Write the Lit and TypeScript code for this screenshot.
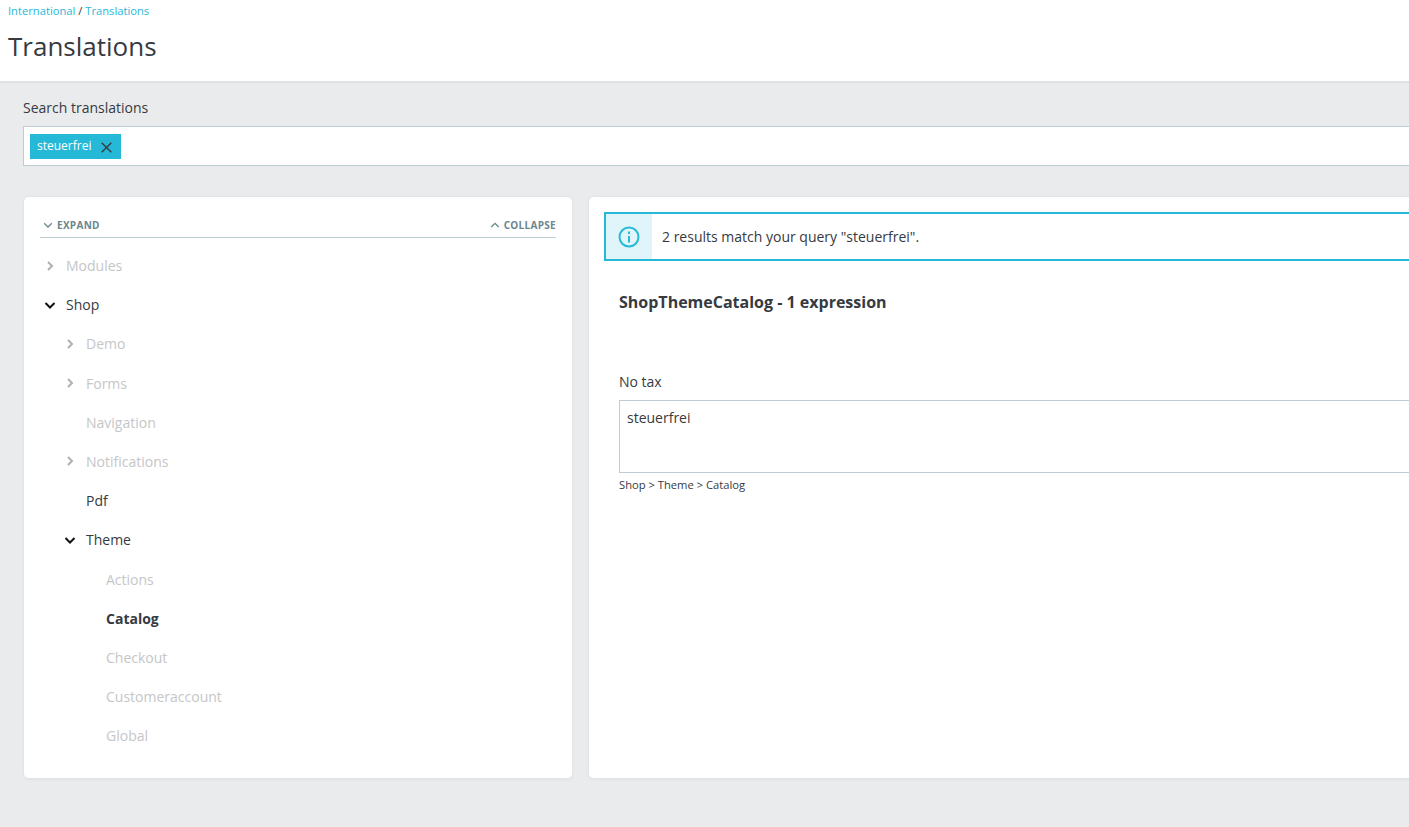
import { LitElement, html, css } from "lit";
import { customElement } from "lit/decorators.js";

type Row = { label: string; level: number; state: "closed" | "open" | "leaf"; kind: "muted" | "active" | "selected" };

const ROWS: Row[] = [
  { label: "Modules", level: 0, state: "closed", kind: "muted" },
  { label: "Shop", level: 0, state: "open", kind: "active" },
  { label: "Demo", level: 1, state: "closed", kind: "muted" },
  { label: "Forms", level: 1, state: "closed", kind: "muted" },
  { label: "Navigation", level: 1, state: "leaf", kind: "muted" },
  { label: "Notifications", level: 1, state: "closed", kind: "muted" },
  { label: "Pdf", level: 1, state: "leaf", kind: "active" },
  { label: "Theme", level: 1, state: "open", kind: "active" },
  { label: "Actions", level: 2, state: "leaf", kind: "muted" },
  { label: "Catalog", level: 2, state: "leaf", kind: "selected" },
  { label: "Checkout", level: 2, state: "leaf", kind: "muted" },
  { label: "Customeraccount", level: 2, state: "leaf", kind: "muted" },
  { label: "Global", level: 2, state: "leaf", kind: "muted" },
];

const chevron = (d: string, cls: string) =>
  html`<svg class=${cls} viewBox="0 0 12 12" fill="none" stroke="currentColor"><path d=${d}></path></svg>`;

@customElement("app-root")
export class AppRoot extends LitElement {
  static styles = css`
    :host {
      display: block;
      width: 1409px;
      height: 827px;
      overflow: hidden;
      background: #eaebed;
      font-family: "Open Sans", sans-serif;
      font-size: 14px;
      color: #363a41;
    }
    .header {
      background: #fff;
      height: 81px;
      border-bottom: 2px solid #dfe1e3;
      padding: 0 8px;
    }
    .crumbs {
      font-size: 11.2px;
      line-height: 15px;
      padding-top: 3px;
    }
    .crumbs a {
      color: #25b9d7;
      text-decoration: none;
    }
    h1 {
      margin: 0;
      padding-top: 10px;
      font-size: 26px;
      font-weight: 400;
      line-height: 36px;
    }
    .main {
      width: 1600px;
      padding: 15px 0 0 23px;
      box-sizing: border-box;
    }
    .search-label {
      line-height: 19px;
      margin-bottom: 9px;
    }
    .search {
      height: 40px;
      box-sizing: border-box;
      background: #fff;
      border: 1px solid #bbcdd2;
      padding: 7px 6px;
      display: flex;
      align-items: flex-start;
    }
    .tag {
      display: flex;
      align-items: center;
      height: 25px;
      width: 91px;
      box-sizing: border-box;
      background: #25b9d7;
      color: #fff;
      font-size: 12px;
      padding: 0 7px;
      justify-content: space-between;
    }
    .tag span {
      position: relative;
      top: -1px;
    }
    .tag svg {
      width: 11px;
      height: 11px;
      margin-right: 2px;
      margin-top: 2px;
      color: #363a41;
    }
    .cols {
      display: grid;
      grid-template-columns: 548px 1fr;
      gap: 17px;
      margin-top: 31px;
      margin-left: 1px;
    }
    .card {
      background: #fff;
      height: 582px;
      border-radius: 5px;
      box-shadow: 0 0 4px 0 rgba(0, 0, 0, 0.06);
      box-sizing: border-box;
      border-bottom: 1px solid #dbe6e9;
    }
    .tree {
      padding: 16px 16px 0;
    }
    .tools {
      display: flex;
      justify-content: space-between;
      align-items: center;
      height: 24px;
      border-bottom: 1px solid #bbcdd2;
      font-size: 10px;
      font-weight: 700;
      color: #6c868e;
      letter-spacing: 0.3px;
    }
    .tools div {
      display: flex;
      align-items: center;
      gap: 4px;
    }
    .tools div:first-child {
      margin-left: 3px;
    }
    .tool-icon {
      width: 10px;
      height: 10px;
      color: #6c868e;
      stroke-width: 1.6;
    }
    .rows {
      margin-top: 7.95px;
    }
    .row {
      display: flex;
      align-items: center;
      height: 39.2px;
      padding-left: 4px;
      color: #363a41;
    }
    .row.muted {
      color: #c5c6c8;
    }
    .row.selected {
      font-weight: 700;
    }
    .l1 { padding-left: 24px; }
    .l2 { padding-left: 44px; }
    .arrow {
      width: 12px;
      height: 12px;
      flex: none;
      margin-right: 10px;
      color: #b0b0b0;
      stroke-width: 2;
    }
    .arrow.open {
      color: #111;
    }
    .spacer {
      width: 22px;
      flex: none;
    }
    .results {
      padding: 15px 0 0 15px;
    }
    .alert {
      display: flex;
      align-items: center;
      height: 49px;
      box-sizing: border-box;
      border: 2px solid #25b9d7;
      background: #fff;
    }
    .alert-icon {
      width: 46px;
      height: 100%;
      background: #dff5f9;
      display: flex;
      align-items: center;
      justify-content: center;
      flex: none;
    }
    .alert-icon svg {
      width: 22px;
      height: 22px;
      color: #25b9d7;
    }
    .alert-text {
      margin-left: 10px;
      color: #363a41;
    }
    h2 {
      margin: 30px 0 0 15px;
      font-size: 16px;
      font-weight: 700;
      line-height: 22px;
    }
    .field {
      margin: 59px 0 0 15px;
    }
    .field-label {
      line-height: 19px;
      margin-bottom: 9px;
    }
    .box {
      height: 73px;
      box-sizing: border-box;
      border: 1px solid #bbcdd2;
      padding: 7px;
      line-height: 19px;
    }
    .path {
      font-size: 11.2px;
      line-height: 15px;
      margin-top: 4px;
    }
  `;

  private row(r: Row) {
    const cls = `row l${r.level} ${r.kind}`;
    return html`<div class=${cls}>
      ${r.state === "closed"
        ? chevron("M4 2l4 4-4 4", "arrow")
        : r.state === "open"
          ? chevron("M1.5 4l4.5 4.5L10.5 4", "arrow open")
          : html`<span class="spacer"></span>`}
      <span>${r.label}</span>
    </div>`;
  }

  render() {
    return html`
      <div class="header">
        <div class="crumbs"><a href="#">International</a> / <a href="#">Translations</a></div>
        <h1>Translations</h1>
      </div>
      <div class="main">
        <div class="search-label">Search translations</div>
        <div class="search">
          <div class="tag">
            <span>steuerfrei</span>
            <svg viewBox="0 0 11 11" fill="none" stroke="currentColor" stroke-width="1.4"><path d="M.7.7l9.6 9.6M10.3.7L.7 10.3"></path></svg>
          </div>
        </div>
        <div class="cols">
          <section class="card tree">
            <div class="tools">
              <div>${chevron("M1.5 4l4.5 4.5L10.5 4", "tool-icon")}<span>EXPAND</span></div>
              <div>${chevron("M1.5 8.5L6 4l4.5 4.5", "tool-icon")}<span>COLLAPSE</span></div>
            </div>
            <div class="rows">${ROWS.map((r) => this.row(r))}</div>
          </section>
          <section class="card results">
            <div class="alert">
              <div class="alert-icon">
                <svg viewBox="0 0 22 22" fill="none" stroke="currentColor" stroke-width="2">
                  <circle cx="11" cy="11" r="9.5"></circle>
                  <path d="M11 10v6.5M11 5.5v2.4"></path>
                </svg>
              </div>
              <div class="alert-text">2 results match your query "steuerfrei".</div>
            </div>
            <h2>ShopThemeCatalog - 1 expression</h2>
            <div class="field">
              <div class="field-label">No tax</div>
              <div class="box">steuerfrei</div>
              <div class="path">Shop &gt; Theme &gt; Catalog</div>
            </div>
          </section>
        </div>
      </div>
    `;
  }
}
